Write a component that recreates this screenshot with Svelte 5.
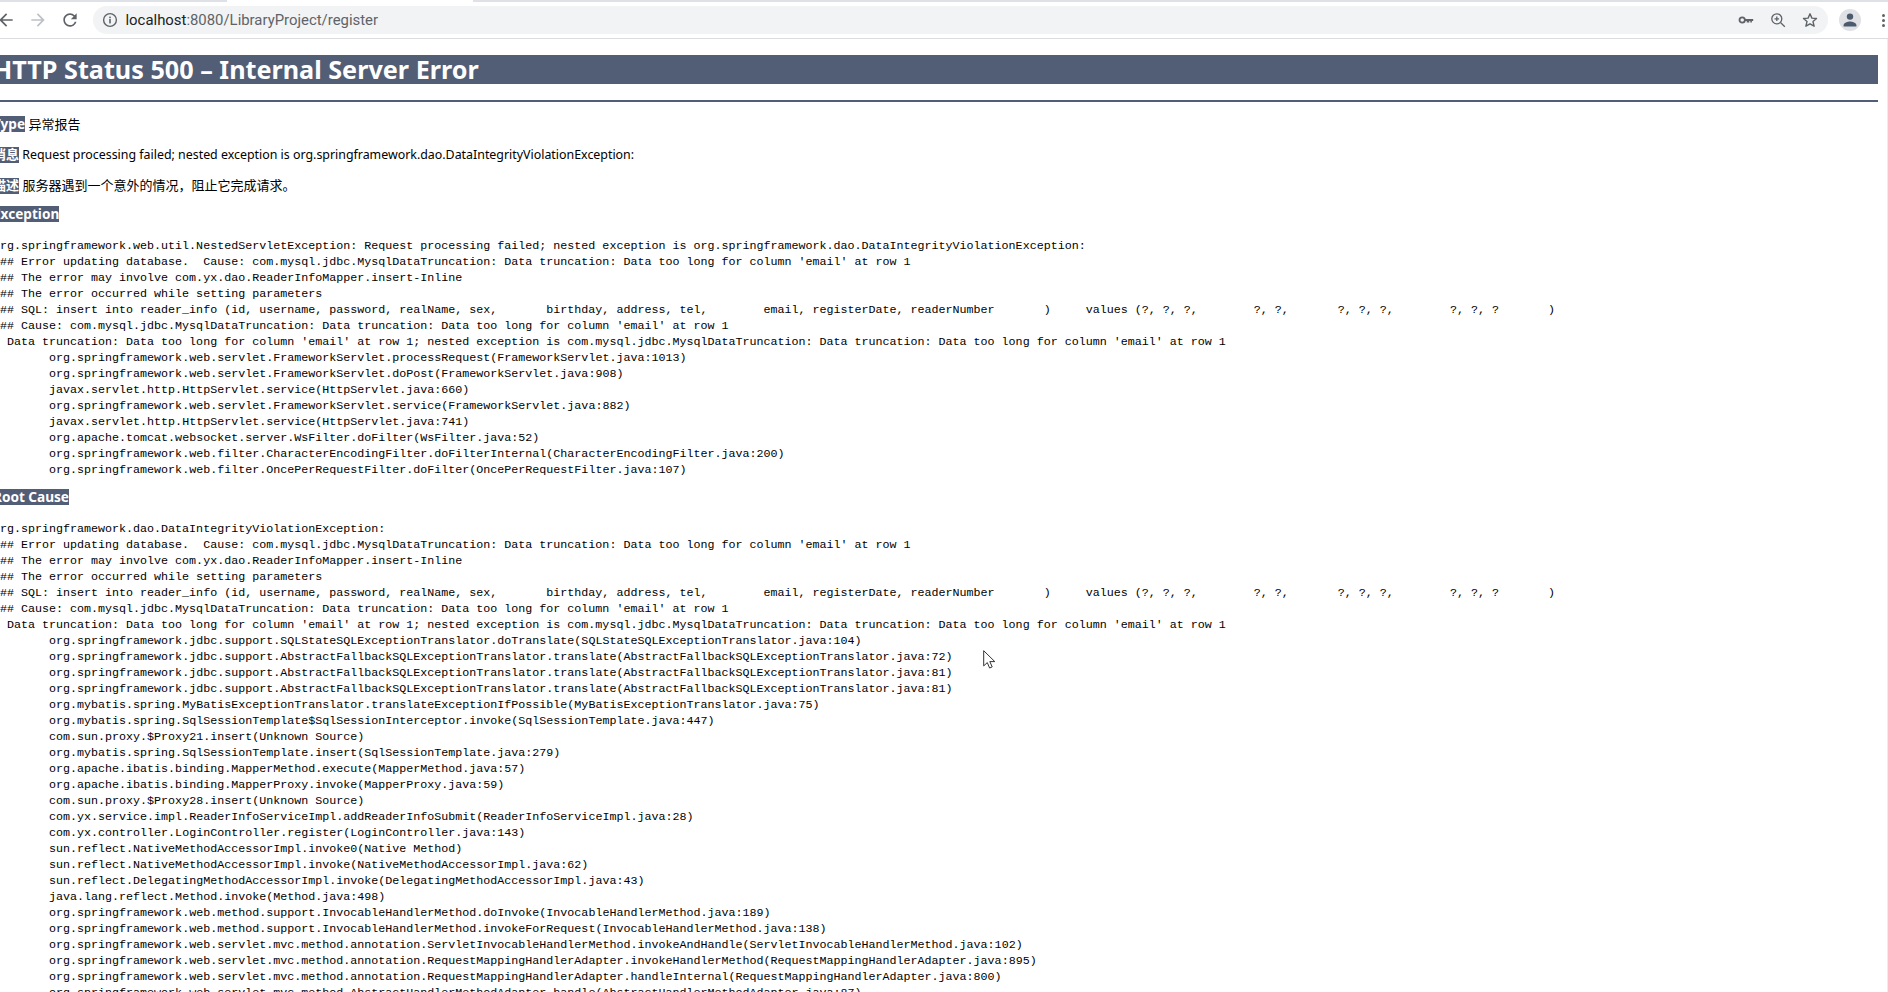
<script>
  const trace1 = `org.springframework.web.util.NestedServletException: Request processing failed; nested exception is org.springframework.dao.DataIntegrityViolationException:
### Error updating database.  Cause: com.mysql.jdbc.MysqlDataTruncation: Data truncation: Data too long for column 'email' at row 1
### The error may involve com.yx.dao.ReaderInfoMapper.insert-Inline
### The error occurred while setting parameters
### SQL: insert into reader_info (id, username, password, realName, sex,       birthday, address, tel,        email, registerDate, readerNumber       )     values (?, ?, ?,        ?, ?,       ?, ?, ?,        ?, ?, ?       )
### Cause: com.mysql.jdbc.MysqlDataTruncation: Data truncation: Data too long for column 'email' at row 1
; Data truncation: Data too long for column 'email' at row 1; nested exception is com.mysql.jdbc.MysqlDataTruncation: Data truncation: Data too long for column 'email' at row 1
\torg.springframework.web.servlet.FrameworkServlet.processRequest(FrameworkServlet.java:1013)
\torg.springframework.web.servlet.FrameworkServlet.doPost(FrameworkServlet.java:908)
\tjavax.servlet.http.HttpServlet.service(HttpServlet.java:660)
\torg.springframework.web.servlet.FrameworkServlet.service(FrameworkServlet.java:882)
\tjavax.servlet.http.HttpServlet.service(HttpServlet.java:741)
\torg.apache.tomcat.websocket.server.WsFilter.doFilter(WsFilter.java:52)
\torg.springframework.web.filter.CharacterEncodingFilter.doFilterInternal(CharacterEncodingFilter.java:200)
\torg.springframework.web.filter.OncePerRequestFilter.doFilter(OncePerRequestFilter.java:107)`;

  const trace2 = `org.springframework.dao.DataIntegrityViolationException:
### Error updating database.  Cause: com.mysql.jdbc.MysqlDataTruncation: Data truncation: Data too long for column 'email' at row 1
### The error may involve com.yx.dao.ReaderInfoMapper.insert-Inline
### The error occurred while setting parameters
### SQL: insert into reader_info (id, username, password, realName, sex,       birthday, address, tel,        email, registerDate, readerNumber       )     values (?, ?, ?,        ?, ?,       ?, ?, ?,        ?, ?, ?       )
### Cause: com.mysql.jdbc.MysqlDataTruncation: Data truncation: Data too long for column 'email' at row 1
; Data truncation: Data too long for column 'email' at row 1; nested exception is com.mysql.jdbc.MysqlDataTruncation: Data truncation: Data too long for column 'email' at row 1
\torg.springframework.jdbc.support.SQLStateSQLExceptionTranslator.doTranslate(SQLStateSQLExceptionTranslator.java:104)
\torg.springframework.jdbc.support.AbstractFallbackSQLExceptionTranslator.translate(AbstractFallbackSQLExceptionTranslator.java:72)
\torg.springframework.jdbc.support.AbstractFallbackSQLExceptionTranslator.translate(AbstractFallbackSQLExceptionTranslator.java:81)
\torg.springframework.jdbc.support.AbstractFallbackSQLExceptionTranslator.translate(AbstractFallbackSQLExceptionTranslator.java:81)
\torg.mybatis.spring.MyBatisExceptionTranslator.translateExceptionIfPossible(MyBatisExceptionTranslator.java:75)
\torg.mybatis.spring.SqlSessionTemplate$SqlSessionInterceptor.invoke(SqlSessionTemplate.java:447)
\tcom.sun.proxy.$Proxy21.insert(Unknown Source)
\torg.mybatis.spring.SqlSessionTemplate.insert(SqlSessionTemplate.java:279)
\torg.apache.ibatis.binding.MapperMethod.execute(MapperMethod.java:57)
\torg.apache.ibatis.binding.MapperProxy.invoke(MapperProxy.java:59)
\tcom.sun.proxy.$Proxy28.insert(Unknown Source)
\tcom.yx.service.impl.ReaderInfoServiceImpl.addReaderInfoSubmit(ReaderInfoServiceImpl.java:28)
\tcom.yx.controller.LoginController.register(LoginController.java:143)
\tsun.reflect.NativeMethodAccessorImpl.invoke0(Native Method)
\tsun.reflect.NativeMethodAccessorImpl.invoke(NativeMethodAccessorImpl.java:62)
\tsun.reflect.DelegatingMethodAccessorImpl.invoke(DelegatingMethodAccessorImpl.java:43)
\tjava.lang.reflect.Method.invoke(Method.java:498)
\torg.springframework.web.method.support.InvocableHandlerMethod.doInvoke(InvocableHandlerMethod.java:189)
\torg.springframework.web.method.support.InvocableHandlerMethod.invokeForRequest(InvocableHandlerMethod.java:138)
\torg.springframework.web.servlet.mvc.method.annotation.ServletInvocableHandlerMethod.invokeAndHandle(ServletInvocableHandlerMethod.java:102)
\torg.springframework.web.servlet.mvc.method.annotation.RequestMappingHandlerAdapter.invokeHandlerMethod(RequestMappingHandlerAdapter.java:895)
\torg.springframework.web.servlet.mvc.method.annotation.RequestMappingHandlerAdapter.handleInternal(RequestMappingHandlerAdapter.java:800)
\torg.springframework.web.servlet.mvc.method.AbstractHandlerMethodAdapter.handle(AbstractHandlerMethodAdapter.java:87)`;
</script>

<div class="window">
  <div class="tabstrip"><div class="tab"></div></div>

  <header class="toolbar">
    <svg class="nav back" viewBox="0 0 24 24"><path d="M20 11H7.83l5.59-5.59L12 4l-8 8 8 8 1.41-1.41L7.83 13H20v-2z" /></svg>
    <svg class="nav forward" viewBox="0 0 24 24"><path d="M4 11h12.17l-5.59-5.59L12 4l8 8-8 8-1.41-1.41L16.17 13H4v-2z" /></svg>
    <svg class="nav reload" viewBox="0 0 24 24"><path d="M17.65 6.35A7.958 7.958 0 0 0 12 4c-4.42 0-7.99 3.58-7.99 8s3.57 8 7.99 8c3.73 0 6.84-2.55 7.73-6h-2.08A5.99 5.99 0 0 1 12 18c-3.31 0-6-2.69-6-6s2.69-6 6-6c1.66 0 3.14.69 4.22 1.78L13 11h7V4l-2.35 2.35z" /></svg>

    <div class="omnibox">
      <svg class="info" viewBox="0 0 16 16">
        <circle cx="8" cy="8" r="6.4" fill="none" stroke="#5f6368" stroke-width="1.4" />
        <rect x="7.2" y="7" width="1.6" height="4.4" fill="#5f6368" />
        <rect x="7.2" y="4.6" width="1.6" height="1.6" fill="#5f6368" />
      </svg>
      <span class="url"><span class="host">localhost</span>:8080/LibraryProject/register</span>
      <span class="spacer"></span>
      <svg class="omni-icon key" viewBox="0 0 16 16">
        <circle cx="4.2" cy="8" r="2.7" fill="none" stroke="#5f6368" stroke-width="1.8" />
        <path d="M6.8 6.9h8.4v2.2h-1.3v1.5h-1.6V9.1h-1v1.5H8.7V9.1H6.8z" fill="#5f6368" />
      </svg>
      <svg class="omni-icon zoom" viewBox="0 0 16 16">
        <circle cx="6.8" cy="6.8" r="5" fill="none" stroke="#5f6368" stroke-width="1.3" />
        <path d="M10.5 10.5l4.3 4.3M6.8 4.5v4.6M4.5 6.8h4.6" fill="none" stroke="#5f6368" stroke-width="1.3" />
      </svg>
      <svg class="omni-icon star" viewBox="0 0 16 16">
        <path d="M8 1.8l1.9 4.3 4.6.4-3.5 3.1 1.1 4.6L8 11.8l-4.1 2.4L5 9.6 1.5 6.5l4.6-.4z" fill="none" stroke="#5f6368" stroke-width="1.4" stroke-linejoin="round" />
      </svg>
    </div>

    <div class="avatar">
      <svg viewBox="0 0 22 22">
        <circle cx="11" cy="7.6" r="3.2" fill="#4c5a70" />
        <path d="M4.6 17.4v-1.5c0-2.3 4.2-3.5 6.4-3.5s6.4 1.2 6.4 3.5v1.5z" fill="#4c5a70" />
      </svg>
    </div>
    <div class="dots"><i></i><i></i><i></i></div>
  </header>

  <div class="content">
    <main class="page">
      <h1>HTTP Status 500 – Internal Server Error</h1>
      <hr />
      <p class="zh"><b class="label">Type</b> 异常报告</p>
      <p><b class="label cjk">消息</b> Request processing failed; nested exception is org.springframework.dao.DataIntegrityViolationException:</p>
      <p class="zh"><b class="label cjk">描述</b> 服务器遇到一个意外的情况，阻止它完成请求。</p>
      <p class="tight"><b class="label">Exception</b></p>
      <pre>{trace1}</pre>
      <p class="tight"><b class="label">Root Cause</b></p>
      <pre>{trace2}</pre>
    </main>
  </div>

  <svg class="cursor" viewBox="0 0 13 19">
    <path d="M.7.7v15.2l3.6-3.3 2.3 5.4 2.6-1.1-2.4-5.3h5z" fill="#fff" stroke="#333" stroke-width="1" stroke-linejoin="round" />
  </svg>
</div>

<style>
  :global(body) {
    margin: 0;
    background: #fff;
  }

  .window {
    position: relative;
    height: 992px;
    overflow: hidden;
    background: #fff;
    display: flex;
    flex-direction: column;
  }

  .tabstrip {
    height: 2px;
    flex: none;
    background: #dee1e6;
    display: flex;
  }

  .tab {
    width: 246px;
    margin-left: 227px;
    background: #fff;
  }

  .toolbar {
    height: 37px;
    flex: none;
    box-sizing: border-box;
    border-bottom: 1px solid #dadce0;
    display: flex;
    align-items: center;
  }

  .nav {
    width: 20px;
    height: 20px;
    flex: none;
    fill: #5f6368;
  }

  .back {
    margin-left: -4px;
  }

  .forward {
    margin-left: 12px;
    fill: #bdc1c6;
  }

  .reload {
    margin-left: 12px;
  }

  .omnibox {
    flex: 1;
    margin-left: 13px;
    height: 28px;
    border-radius: 14px;
    background: #f1f3f4;
    display: flex;
    align-items: center;
    padding: 0 10px 0 8px;
  }

  .info {
    width: 16px;
    height: 16px;
    margin-left: 1px;
    flex: none;
  }

  .url {
    margin-left: 7.5px;
    font-family: Roboto, "Liberation Sans", sans-serif;
    font-size: 14.9px;
    color: #5f6368;
  }

  .host {
    color: #202124;
  }

  .spacer {
    flex: 1;
  }

  .omni-icon {
    width: 16px;
    height: 16px;
    flex: none;
  }

  .zoom {
    margin-left: 16px;
  }

  .star {
    margin-left: 16px;
  }

  .avatar {
    width: 22px;
    height: 22px;
    margin-left: 11px;
    border-radius: 50%;
    background: #dfe1e5;
    flex: none;
  }

  .avatar svg {
    display: block;
  }

  .dots {
    margin-left: 21px;
    margin-right: 3px;
    width: 3px;
    display: flex;
    flex-direction: column;
    gap: 2px;
  }

  .dots i {
    display: block;
    width: 3px;
    height: 3px;
    border-radius: 50%;
    background: #5f6368;
  }

  .content {
    flex: 1;
    min-height: 0;
    overflow: hidden;
    border-right: 1px solid #ececec;
  }

  .page {
    margin-left: -7px;
    margin-right: 9px;
    padding-top: 16px;
    color: #000;
  }

  h1 {
    margin: 0;
    height: 29px;
    line-height: 29px;
    background: #525d76;
    color: #fff;
    font-size: 25.2px;
    font-weight: bold;
    font-family: "Noto Sans", "Liberation Sans", sans-serif;
  }

  hr {
    margin: 16px 0 14px;
    height: 2px;
    border: 0;
    background: #525d76;
  }

  p {
    margin: 0 0 14.5px;
    height: 16px;
    line-height: 16px;
    font-size: 12.4px;
    font-family: "Noto Sans", "Noto Sans CJK SC", sans-serif;
    white-space: pre;
  }

  p.zh {
    font-size: 13px;
  }

  p.tight {
    margin-top: -2px;
    margin-bottom: 0;
  }

  .label {
    display: inline-block;
    height: 16px;
    line-height: 15px;
    background: #525d76;
    color: #fff;
    font-size: 13.6px;
    font-weight: bold;
    font-family: "Noto Sans", "Noto Sans CJK SC", sans-serif;
  }

  .label.cjk {
    font-size: 13px;
  }

  pre {
    margin: 16px 0 13px;
    font-family: "Liberation Mono", monospace;
    font-size: 11.68px;
    line-height: 16px;
    tab-size: 8;
    color: #000;
  }

  .cursor {
    position: absolute;
    left: 983px;
    top: 650px;
    width: 13px;
    height: 19px;
  }
</style>
